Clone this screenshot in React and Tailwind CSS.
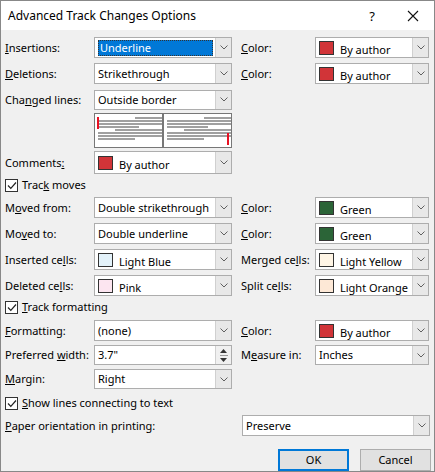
const font = { fontFamily: '"Noto Sans", "Open Sans", sans-serif' };

function Arrow() {
  return (
    <div className="w-[16px] h-full border-l border-[#d0d0d0] bg-[#e8e8e8] flex items-center justify-center">
      <svg width="8" height="5" viewBox="0 0 8 5"><path d="M0.5 0.5 L4 4 L7.5 0.5" fill="none" stroke="#606060" strokeWidth="1" /></svg>
    </div>
  );
}

function Combo({ w, h = 21, text, swatch, selected }) {
  return (
    <div className="flex border border-[#adadad] bg-white shrink-0" style={{ width: w, height: h }}>
      <div className="flex-1 flex items-center pl-[3px] overflow-hidden whitespace-nowrap">
        {swatch && <span className="w-[15px] h-[14px] border border-[#333] mr-[6px] shrink-0" style={{ background: swatch }} />}
        {selected ? (
          <span className="bg-[#0078d7] text-white px-[1px] border border-dotted border-[#333] w-[115px] leading-[14px]">{text}</span>
        ) : (
          <span className={swatch ? "mt-[5px]" : ""}>{text}</span>
        )}
      </div>
      <Arrow />
    </div>
  );
}

function Label({ children, w = 89 }) {
  return <div className="shrink-0 whitespace-nowrap" style={{ width: w }}>{children}</div>;
}

function Row({ l, left, rl, right, mt, h = 21 }) {
  return (
    <div className="flex items-center" style={{ marginTop: mt, height: h }}>
      <Label>{l}</Label>
      {left}
      {rl && <div className="ml-[9px] w-[74px] shrink-0 whitespace-nowrap">{rl}</div>}
      {right}
    </div>
  );
}

function Check({ children, mt }) {
  return (
    <div className="flex items-center whitespace-nowrap" style={{ marginTop: mt, height: 14 }}>
      <span className="w-[13px] h-[13px] border border-[#333] bg-white flex items-center justify-center mr-[4px]">
        <svg width="10" height="9" viewBox="0 0 10 9"><path d="M1 4.5 L3.8 7.3 L9 1.5" fill="none" stroke="#222" strokeWidth="1.2" /></svg>
      </span>
      <span>{children}</span>
    </div>
  );
}

function Lines({ right }) {
  const ls = [[60, 100], [5, 100], [5, 100], [5, 65], [30, 100], [5, 100], [5, 100], [5, 60]];
  return (
    <div className="relative flex-1 bg-white py-[3px] flex flex-col gap-[1px]">
      {ls.map(([a, b], i) => (
        <div key={i} className="h-[2px] relative">
          <div className="absolute h-[2px] bg-[#a0a0a0]" style={{ left: a + "%", width: b - a + "%" }} />
        </div>
      ))}
      <div className={"absolute w-[2px] bg-[#e81123] " + (right ? "right-[2px] top-[19px] h-[12px]" : "left-[2px] top-[3px] h-[12px]")} />
    </div>
  );
}

export default function App() {
  const C = 138, R = 114;
  return (
    <div className="w-[435px] h-[472px] border border-[#888] bg-[#f0f0f0] text-[11px] leading-[14px] text-black overflow-hidden" style={font}>
      <div className="h-[29px] bg-white flex items-center pl-[7px] text-[12px]">
        <span className="flex-1">Advanced Track Changes Options</span>
        <span className="w-[46px] text-center text-[13px]">?</span>
        <svg className="mr-[15px] ml-[12px]" width="12" height="12" viewBox="0 0 12 12"><path d="M1 1 L11 11 M11 1 L1 11" stroke="#111" strokeWidth="1.1" /></svg>
      </div>
      <div className="pl-[4px]">
        <Row mt={7} l={<><u>I</u>nsertions:</>} left={<Combo w={C} text="Underline" selected />} rl={<><u>C</u>olor:</>} right={<Combo w={R} text="By author" swatch="#d13438" />} />
        <Row mt={5} l={<><u>D</u>eletions:</>} left={<Combo w={C} text="Strikethrough" />} rl={<><u>C</u>olor:</>} right={<Combo w={R} text="By author" swatch="#d13438" />} />
        <Row mt={5} l={<>Cha<u>n</u>ged lines:</>} left={<Combo w={C} h={20} text="Outside border" />} />
        <div className="flex mt-[3px]">
          <Label />
          <div className="w-[138px] h-[35px] border border-[#777] bg-[#777] flex gap-[2px]">
            <Lines />
            <Lines right />
          </div>
        </div>
        <Row mt={3} h={23} l={<>Comments<u>:</u></>} left={<Combo w={C} h={23} text="By author" swatch="#d13438" />} />
        <Check mt={4}>Trac<u>k</u> moves</Check>
        <Row mt={5} l={<>M<u>o</u>ved from:</>} left={<Combo w={C} text="Double strikethrough" />} rl={<><u>C</u>olor:</>} right={<Combo w={R} text="Green" swatch="#2b6437" />} />
        <Row mt={5} l={<>Mo<u>v</u>ed to:</>} left={<Combo w={C} text="Double underline" />} rl={<><u>C</u>olor:</>} right={<Combo w={R} text="Green" swatch="#2b6437" />} />
        <Row mt={5} l={<>Inserted ce<u>l</u>ls:</>} left={<Combo w={C} text="Light Blue" swatch="#e3f2fa" />} rl={<>Merged ce<u>l</u>ls:</>} right={<Combo w={R} text="Light Yellow" swatch="#fff5e5" />} />
        <Row mt={5} l={<>Deleted ce<u>l</u>ls:</>} left={<Combo w={C} text="Pink" swatch="#fce5f0" />} rl={<>Split ce<u>l</u>ls:</>} right={<Combo w={R} text="Light Orange" swatch="#fde8d6" />} />
        <Check mt={4}><u>T</u>rack formatting</Check>
        <Row mt={6} l={<><u>F</u>ormatting:</>} left={<Combo w={C} text="(none)" />} rl={<><u>C</u>olor:</>} right={<Combo w={R} text="By author" swatch="#d13438" />} />
        <Row mt={4} h={20} l={<>Preferred <u>w</u>idth:</>} left={
          <div className="flex border border-[#adadad] bg-white w-[138px] h-[20px] shrink-0">
            <div className="flex-1 pl-[3px] flex items-center">3.7"</div>
            <div className="w-[16px] flex flex-col items-center justify-center gap-[2px] bg-[#f0f0f0] border-l border-[#d0d0d0]">
              <svg width="7" height="4" viewBox="0 0 7 4"><path d="M0 4 L3.5 0 L7 4Z" fill="#333" /></svg>
              <div className="w-[8px] h-[1px] bg-[#999]" />
              <svg width="7" height="4" viewBox="0 0 7 4"><path d="M0 0 L3.5 4 L7 0Z" fill="#333" /></svg>
            </div>
          </div>
        } rl={<>M<u>e</u>asure in:</>} right={<Combo w={R} h={20} text="Inches" />} />
        <Row mt={4} h={20} l={<><u>M</u>argin:</>} left={<Combo w={C} h={20} text="Right" />} />
        <Check mt={7}><u>S</u>how lines connecting to text</Check>
        <div className="flex items-center mt-[5px] h-[21px]">
          <div className="w-[237px]"><u>P</u>aper orientation in printing:</div>
          <Combo w={188} text="Preserve" />
        </div>
        <div className="flex justify-end gap-[11px] mt-[13px] pr-[3px]">
          <button className="w-[71px] h-[22px] bg-[#e1e1e1] border-2 border-[#0078d7]">OK</button>
          <button className="w-[71px] h-[22px] bg-[#e1e1e1] border border-[#adadad]">Cancel</button>
        </div>
      </div>
    </div>
  );
}
